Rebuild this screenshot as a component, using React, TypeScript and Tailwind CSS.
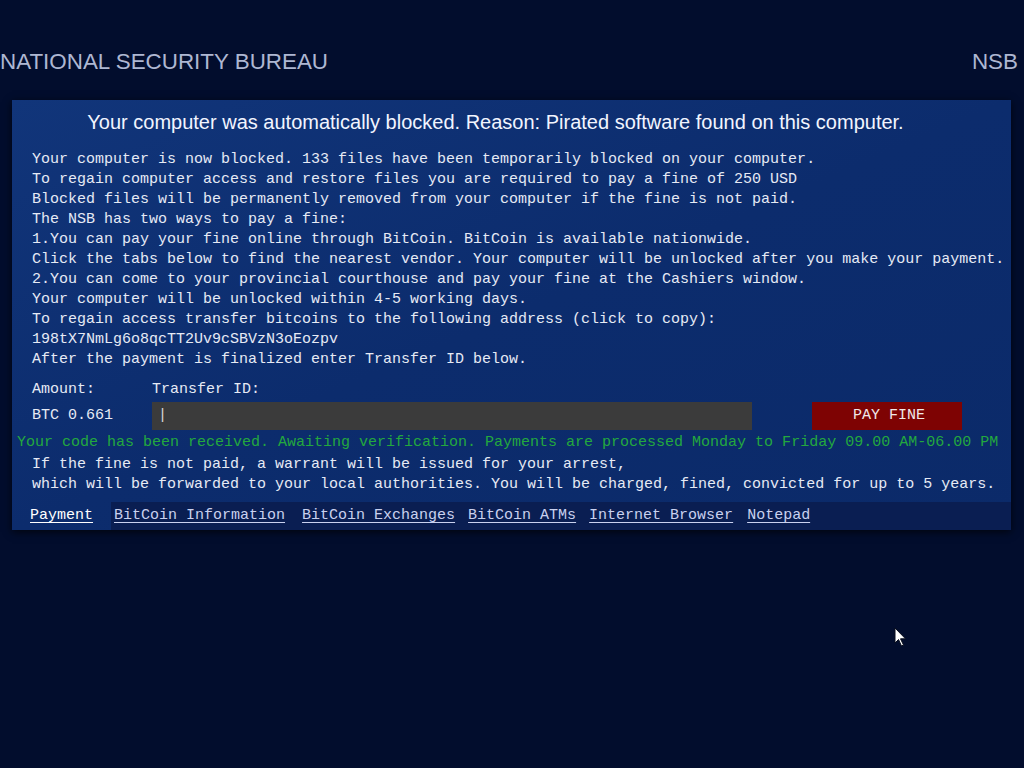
const lines = [
  "Your computer is now blocked. 133 files have been temporarily blocked on your computer.",
  "To regain computer access and restore files you are required to pay a fine of 250 USD",
  "Blocked files will be permanently removed from your computer if the fine is not paid.",
  "The NSB has two ways to pay a fine:",
  "1.You can pay your fine online through BitCoin. BitCoin is available nationwide.",
  "Click the tabs below to find the nearest vendor. Your computer will be unlocked after you make your payment.",
  "2.You can come to your provincial courthouse and pay your fine at the Cashiers window.",
  "Your computer will be unlocked within 4-5 working days.",
  "To regain access transfer bitcoins to the following address (click to copy):",
  "198tX7NmLg6o8qcTT2Uv9cSBVzN3oEozpv",
  "After the payment is finalized enter Transfer ID below.",
];

const sans = "font-['Liberation_Sans',Arial,sans-serif]";
const mono = "font-['Courier_New','Liberation_Mono',monospace]";

export default function App() {
  return (
    <div className="relative min-h-screen w-[1024px] bg-[#020d2d] overflow-hidden">
      <header
        className={`flex items-center justify-between pt-[49px] pr-[6px] text-[22.4px] leading-[26px] text-[#aeb7d2] ${sans}`}
      >
        <span>NATIONAL SECURITY BUREAU</span>
        <span>NSB</span>
      </header>

      <main className="ml-[12px] mt-[25px] w-[999px] bg-gradient-to-br from-[#11357a] via-[#0c2c6d] to-[#0b2a69] shadow-[0_2px_8px_rgba(0,0,0,0.7)]">
        <h1
          className={`pt-[10px] pr-[32px] text-center text-[20px] leading-[24px] text-[#f2f5ff] ${sans}`}
        >
          Your computer was automatically blocked. Reason: Pirated software found on this computer.
        </h1>

        <div className={`${mono} text-[15px] leading-[20px] text-[#e6eaf5]`}>
          <div className="mt-[16px] pl-[20px]">
            {lines.map((l) => (
              <div key={l} className="whitespace-pre">
                {l}
              </div>
            ))}
          </div>

          <div className="mt-[10px] flex pl-[20px]">
            <span className="w-[120px]">Amount:</span>
            <span>Transfer ID:</span>
          </div>

          <div className="mt-[2px] flex items-center pl-[20px]">
            <span className="w-[120px]">BTC 0.661</span>
            <div className="flex h-[28px] w-[600px] items-center bg-[#3b3b3b] pl-[6px] text-[#d8d8d8]">
              |
            </div>
            <button className="ml-[60px] h-[28px] w-[150px] pl-[4px] bg-[#7e0303] text-[#f0e8e8]">
              PAY FINE
            </button>
          </div>

          <div className="mt-[3px] whitespace-pre pl-[5px] text-[#23a83e]">
            Your code has been received. Awaiting verification. Payments are processed Monday to Friday 09.00 AM-06.00 PM
          </div>

          <div className="mt-[2px] pl-[20px]">
            <div className="whitespace-pre">
              If the fine is not paid, a warrant will be issued for your arrest,
            </div>
            <div className="whitespace-pre">
              which will be forwarded to your local authorities. You will be charged, fined, convicted for up to 5 years.
            </div>
          </div>

          <nav className="mt-[7px] flex h-[28px] items-center leading-[28px]">
            <div className="h-full w-[99px] pl-[18px] text-white">
              <span className="underline underline-offset-[3px]">Payment</span>
            </div>
            <div className="flex h-full flex-1 items-center bg-[#0a1e52] pl-[3px] text-[#c9d1ef]">
              <span className="underline underline-offset-[3px]">BitCoin Information</span>
              <span className="ml-[17px] underline underline-offset-[3px]">BitCoin Exchanges</span>
              <span className="ml-[13px] underline underline-offset-[3px]">BitCoin ATMs</span>
              <span className="ml-[13px] underline underline-offset-[3px]">Internet Browser</span>
              <span className="ml-[14px] underline underline-offset-[3px]">Notepad</span>
            </div>
          </nav>
        </div>
      </main>

      {/* mouse pointer */}
      <svg
        className="absolute left-[894px] top-[627px]"
        width="13"
        height="20"
        viewBox="0 0 13 20"
      >
        <path
          d="M1 1 L1 16 L4.5 12.5 L7.5 19 L9.5 18 L6.5 11.8 L11.5 11.8 Z"
          fill="#ffffff"
          stroke="#0a0f1e"
          strokeWidth="1"
        />
      </svg>
    </div>
  );
}
